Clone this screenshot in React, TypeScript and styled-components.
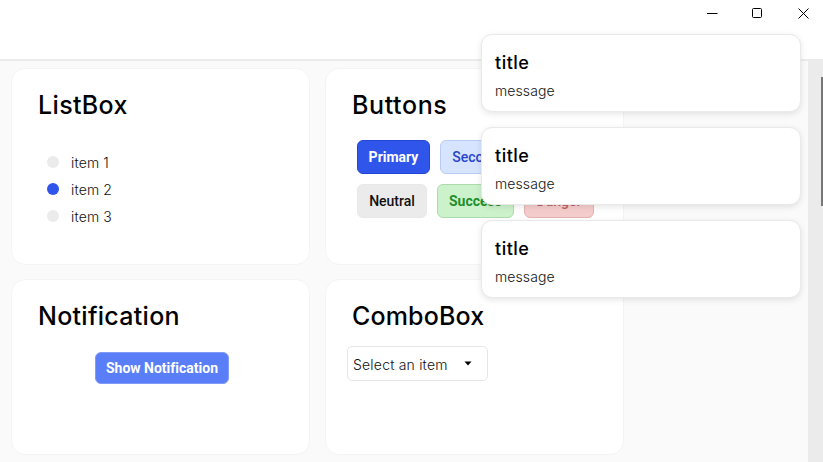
import React from 'react';
import styled, { createGlobalStyle } from 'styled-components';

const GlobalStyle = createGlobalStyle`
  * { box-sizing: border-box; }
  html, body { margin: 0; padding: 0; overflow: hidden; }
  body { font-family: Inter, "Liberation Sans", sans-serif; color: #000; background: #fff; }
`;

const Window = styled.div`
  position: relative;
  display: flex;
  flex-direction: column;
  width: 823px;
  height: 462px;
  overflow: hidden;
  background: #fff;
`;

const TitleBar = styled.header`
  flex: none;
  display: flex;
  justify-content: flex-end;
  align-items: flex-start;
  height: 61px;
  border-bottom: 2px solid #ebebeb;
`;

const WindowButton = styled.button`
  display: flex;
  align-items: center;
  justify-content: center;
  width: 45px;
  height: 26px;
  padding: 0;
  border: 0;
  background: transparent;
`;

const WindowButtons = styled.div`
  display: flex;
  margin-right: -2px;
`;

const Body = styled.div`
  flex: 1;
  display: flex;
  min-height: 0;
  background: #fafafa;
`;

const CardGrid = styled.main`
  flex: 1;
  display: grid;
  grid-template-columns: 299px 299px;
  grid-template-rows: 197px 176px;
  gap: 14px 15px;
  padding: 7px 0 0 11px;
`;

const Card = styled.section`
  border: 1px solid #f4f4f4;
  border-radius: 14px;
  background: #fff;
`;

const CardTitle = styled.h2<{ $spacing?: number }>`
  margin: 19px 0 0 26px;
  font-size: 25px;
  font-weight: 500;
  line-height: 34px;
  letter-spacing: ${(p) => p.$spacing ?? 0}px;
`;

const List = styled.ul`
  display: flex;
  flex-direction: column;
  margin: 27px 0 0 35px;
  padding: 0;
  list-style: none;
`;

const ListItem = styled.li`
  display: flex;
  align-items: center;
  gap: 12px;
  height: 27px;
  font-size: 14px;
  font-weight: 300;
  letter-spacing: 0.15px;
  color: #111;
`;

const Dot = styled.span<{ $on?: boolean }>`
  width: 12px;
  height: 12px;
  margin-top: -1px;
  border-radius: 50%;
  background: ${(p) => (p.$on ? '#2f55eb' : '#ebebeb')};
`;

const ButtonRows = styled.div`
  display: flex;
  flex-direction: column;
  gap: 10px;
  margin: 18px 0 0 31px;
`;

const ButtonRow = styled.div`
  display: flex;
  gap: 10px;
`;

const tones = {
  primary: ['#2f55eb', '#2346d0', '#fff', 700],
  secondary: ['#d6e4ff', '#b9cbf0', '#2a44cb', 500],
  neutral: ['#ebebeb', '#e8e8e8', '#111', 500],
  success: ['#ccf2cb', '#addcac', '#1f8f2b', 700],
  danger: ['#f5cccc', '#e6b3b3', '#c25a60', 500],
  accent: ['#597ef7', '#7f9af8', '#fff', 700],
} as const;

const Button = styled.button<{ $tone: keyof typeof tones; $width: number; $height?: number }>`
  flex: none;
  display: flex;
  align-items: center;
  justify-content: center;
  width: ${(p) => p.$width}px;
  height: ${(p) => p.$height ?? 34}px;
  padding: 0;
  border: 1px solid ${(p) => tones[p.$tone][1]};
  border-radius: 6px;
  background: ${(p) => tones[p.$tone][0]};
  color: ${(p) => tones[p.$tone][2]};
  font-family: Roboto, sans-serif;
  font-size: 14px;
  font-weight: ${(p) => tones[p.$tone][3]};
  font-variant-ligatures: none;
  white-space: nowrap;
`;

const NotificationAction = styled.div`
  display: flex;
  margin: 19px 0 0 83px;
`;

const Select = styled.div`
  display: flex;
  align-items: center;
  width: 141px;
  height: 35px;
  margin: 13px 0 0 21px;
  padding: 2px 15px 0 5px;
  border: 1px solid #e6e6e6;
  border-radius: 5px;
  font-size: 14px;
  font-weight: 300;
  letter-spacing: 0.2px;
  color: #111;
`;

const Caret = styled.svg`
  margin: -2px 0 0 auto;
`;

const ScrollTrack = styled.div`
  flex: none;
  display: flex;
  justify-content: flex-end;
  width: 15px;
  background: #ebebeb;
`;

const ScrollThumb = styled.div`
  width: 2px;
  height: 129px;
  margin-top: 16px;
  background: #777;
`;

const ToastStack = styled.aside`
  position: absolute;
  top: 34px;
  right: 22px;
  display: flex;
  flex-direction: column;
  gap: 15px;
  width: 320px;
`;

const Toast = styled.article`
  height: 78px;
  padding: 16px 13px 0;
  border: 1px solid #e9e9e9;
  border-radius: 11px;
  background: #fff;
  box-shadow: 0 2px 6px rgba(0, 0, 0, 0.1);
`;

const ToastTitle = styled.h3`
  margin: 0;
  font-size: 18px;
  font-weight: 500;
  line-height: 24px;
  letter-spacing: 0.5px;
`;

const ToastMessage = styled.p`
  margin: 6px 0 0;
  font-size: 14px;
  font-weight: 300;
  line-height: 20px;
  letter-spacing: 0.1px;
  color: #111;
`;

const items = ['item 1', 'item 2', 'item 3'];

export default function App() {
  return (
    <>
      <GlobalStyle />
      <Window>
        <TitleBar>
          <WindowButtons>
            <WindowButton aria-label="Minimize">
              <svg width="11" height="11" viewBox="0 0 11 11"><path d="M0 5.5h10.5" stroke="#000" /></svg>
            </WindowButton>
            <WindowButton aria-label="Maximize">
              <svg width="11" height="11" viewBox="0 0 11 11"><rect x=".5" y=".5" width="9" height="9" rx="1" fill="none" stroke="#000" /></svg>
            </WindowButton>
            <WindowButton aria-label="Close">
              <svg width="12" height="11" viewBox="0 0 12 11"><path d="M1.5.5l10 10M11.5.5l-10 10" stroke="#000" /></svg>
            </WindowButton>
          </WindowButtons>
        </TitleBar>
        <Body>
          <CardGrid>
            <Card>
              <CardTitle $spacing={0.35}>ListBox</CardTitle>
              <List>
                {items.map((item, i) => (
                  <ListItem key={item}><Dot $on={i === 1} /><span>{item}</span></ListItem>
                ))}
              </List>
            </Card>
            <Card>
              <CardTitle $spacing={0.6}>Buttons</CardTitle>
              <ButtonRows>
                <ButtonRow>
                  <Button $tone="primary" $width={73}>Primary</Button>
                  <Button $tone="secondary" $width={91}>Secondary</Button>
                </ButtonRow>
                <ButtonRow>
                  <Button $tone="neutral" $width={70}>Neutral</Button>
                  <Button $tone="success" $width={77}>Success</Button>
                  <Button $tone="danger" $width={70}>Danger</Button>
                </ButtonRow>
              </ButtonRows>
            </Card>
            <Card>
              <CardTitle $spacing={0.28}>Notification</CardTitle>
              <NotificationAction>
                <Button $tone="accent" $width={134} $height={32}>Show Notification</Button>
              </NotificationAction>
            </Card>
            <Card>
              <CardTitle $spacing={0.15}>ComboBox</CardTitle>
              <Select>
                <span>Select an item</span>
                <Caret width="8" height="5" viewBox="0 0 8 5"><path d="M.5.5h7L4 4.5z" fill="#000" /></Caret>
              </Select>
            </Card>
          </CardGrid>
          <ScrollTrack><ScrollThumb /></ScrollTrack>
        </Body>
        <ToastStack>
          {[0, 1, 2].map((n) => (
            <Toast key={n}>
              <ToastTitle>title</ToastTitle>
              <ToastMessage>message</ToastMessage>
            </Toast>
          ))}
        </ToastStack>
      </Window>
    </>
  );
}
